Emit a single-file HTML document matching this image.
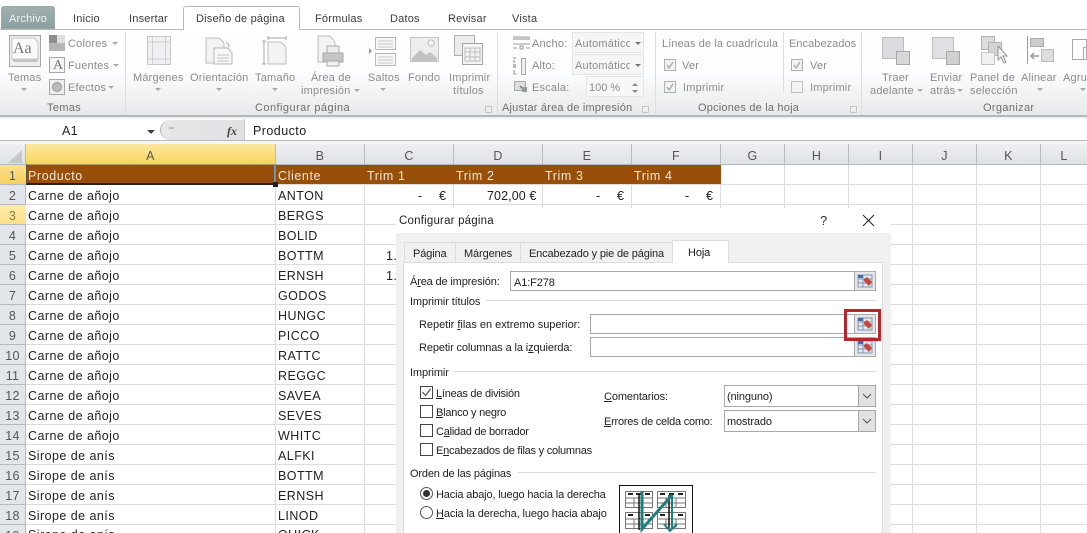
<!DOCTYPE html>
<html lang="es"><head><meta charset="utf-8"><title>Configurar página</title>
<style>
html,body{margin:0;padding:0;background:#fff}
#p{position:relative;width:1087px;height:533px;overflow:hidden;background:#fff;font-family:"Liberation Sans",sans-serif;font-size:12px;color:#222}
#p div,#p span.a,#p svg{position:absolute}
.t{position:absolute;white-space:nowrap;line-height:14px;height:14px;margin-top:1px}
.tab{color:#3c3c3c;font-size:11px;letter-spacing:.2px;top:11px}
.r{color:#8b8b8b;font-size:11px;letter-spacing:.2px;text-align:center}
.g{color:#6e6e6e;font-size:11px;letter-spacing:.35px;top:100px}
.c{font-size:12.5px;letter-spacing:.45px;color:#222}
.h{color:#555;font-size:12.5px;text-align:center;top:148px;letter-spacing:.3px}
.n{color:#555;font-size:12.5px;left:0;width:25px;text-align:center;letter-spacing:.3px}
.w{font-size:12.5px;letter-spacing:.6px;top:168px;color:#f3e6d6}
.d{font-size:11px;color:#222;letter-spacing:-.12px}
.k{letter-spacing:-.24px}
.tri{position:absolute;width:0;height:0;border-left:3px solid transparent;border-right:3px solid transparent;border-top:3px solid #aaa}
u{text-decoration:underline}
</style></head><body><div id="p">

<!-- tabs -->
<div style="left:1px;top:6px;width:54px;height:23px;background:linear-gradient(#9fb0b0,#8ba0a0);border-radius:3px 3px 0 0;border:1px solid #9aa8a8;box-sizing:border-box"></div>
<span class="t tab" style="left:9px;color:#eef2f2">Archivo</span>
<div style="left:0;top:29px;width:1087px;height:1px;background:#b9b9b9"></div>
<div style="left:183px;top:6px;width:117px;height:24px;background:#fff;border:1px solid #b9b9b9;border-bottom:0;border-radius:3px 3px 0 0;box-sizing:border-box"></div>
<span class="t tab" style="left:73px">Inicio</span>
<span class="t tab" style="left:129px">Insertar</span>
<span class="t tab" style="left:196px">Diseño de página</span>
<span class="t tab" style="left:315px">Fórmulas</span>
<span class="t tab" style="left:390px">Datos</span>
<span class="t tab" style="left:448px">Revisar</span>
<span class="t tab" style="left:512px">Vista</span>

<!-- ribbon -->
<div style="left:0;top:30px;width:1087px;height:85px;background:linear-gradient(#fff 0,#fdfdfe 50%,#e7e9ec 100%)"></div>
<div style="left:0;top:115px;width:1087px;height:2px;background:#b4b6b9"></div>
<div style="left:0;top:117px;width:1087px;height:2px;background:#f1f2f3"></div>
<div style="left:125px;top:32px;width:1px;height:83px;background:#dcdfe2"></div>
<div style="left:497px;top:32px;width:1px;height:83px;background:#dcdfe2"></div>
<div style="left:655px;top:32px;width:1px;height:83px;background:#dcdfe2"></div>
<div style="left:783px;top:32px;width:1px;height:60px;background:#dcdfe2"></div>
<div style="left:861px;top:32px;width:1px;height:83px;background:#dcdfe2"></div>

<!-- ribbon icons -->
<svg style="left:0;top:30px" width="1087" height="85" viewBox="0 30 1087 85" fill="none">
<rect x="9.5" y="35.5" width="31" height="31" fill="#eeeeee" stroke="#a8a8a8"/>
<path d="M12 38h22l4 4v17H12z" fill="#fafafa" stroke="#c4c4c4"/>
<rect x="13" y="59" width="25" height="3" fill="#c4c4c4"/>
<rect x="49" y="35" width="16" height="16" fill="#b5b5b5"/><rect x="49" y="35" width="8" height="8" fill="#8f8f8f"/><rect x="57" y="35" width="8" height="8" fill="#dedede"/>
<rect x="49.5" y="57.5" width="15" height="15" fill="#f4f4f4" stroke="#a8a8a8"/>
<rect x="49.5" y="79.5" width="15" height="15" fill="#eee" stroke="#a8a8a8"/><circle cx="57" cy="87" r="4.5" fill="#bbb" stroke="#999"/>
<rect x="147.5" y="36.5" width="23" height="28" fill="#f0f0f2" stroke="#c6c6c8"/><path d="M147 42h24M147 59h24M152.500 36v29M165.500 36v29" stroke="#d0d0d2"/>
<path d="M206 38h13l5 5v20h-18z" fill="#f3f3f3" stroke="#bdbdbd"/>
<path d="M214 48h14l4 5v11h-18z" fill="#f8f8f8" stroke="#b5b5b5" /><path d="M217 55h12M217 58h12M217 61h12" stroke="#c4c4c4"/>
<path d="M226 42l3 3-1 2" stroke="#aaa"/>
<path d="M268 38h18M268 36v4M286 36v4M264 41v23M262 41h4M262 64h4" stroke="#a6a6a6"/>
<path d="M268 42h13l5 5v17h-18z" fill="#f3f3f3" stroke="#bdbdbd"/>
<path d="M318 36h12l5 6v20h-17z" fill="#f3f3f3" stroke="#bdbdbd"/>
<rect x="323" y="53" width="20" height="9" fill="#c5c5c5" stroke="#a8a8a8"/><rect x="327" y="46" width="12" height="7" fill="#eee" stroke="#a8a8a8"/><rect x="327" y="61" width="12" height="5" fill="#f2f2f2" stroke="#a8a8a8"/>
<rect x="375.500" y="37.500" width="20" height="12" fill="#f6f6f6" stroke="#b8b8b8"/><rect x="375.500" y="53.500" width="20" height="12" fill="#f6f6f6" stroke="#b8b8b8"/>
<path d="M378 41h15M378 44h15M378 47h15M378 57h15M378 60h15M378 63h15" stroke="#c8c8c8"/><path d="M369 48l3 3-3 3z" fill="#9a9a9a"/>
<rect x="410.500" y="37.500" width="28" height="24" fill="#ededed" stroke="#c4c4c4"/><path d="M412 58l8-8 6 5 4-3 7 6v3h-25z" fill="#c2c2c2"/><circle cx="431" cy="43" r="3" fill="#f8f8f8" stroke="#bbb"/>
<rect x="454.500" y="35.500" width="20" height="20" fill="#ececec" stroke="#b0b0b0"/><rect x="462.500" y="43.500" width="20" height="21" fill="#f4f4f4" stroke="#a6a6a6"/><path d="M465 48h15v13h-15zM470 48v13M475 48v13M465 52h15M465 57h15" stroke="#bdbdbd"/>
<path d="M513 37h17M513 44h17" stroke="#9a9a9a"/><rect x="513" y="37" width="17" height="3" fill="#c4c4c4"/><path d="M513 48h4M526 48h4M520 46h3v3h-3z" stroke="#9a9a9a"/>
<path d="M513 58h3M513 74h3M514 60v3M514 70v3" stroke="#8f8f8f"/><rect x="513" y="64" width="3" height="4" fill="#bbb"/><rect x="521.500" y="58.500" width="4" height="16" fill="#eee" stroke="#aaa"/>
<rect x="514.500" y="81.500" width="11" height="9" fill="#ddd" stroke="#aaa"/><path d="M520 86l6 6" stroke="#777" stroke-width="1.500"/><rect x="522" y="87" width="5" height="5" fill="#9a9a9a"/>
<rect x="664.500" y="59.500" width="11" height="11" fill="#f2f2f2" stroke="#b0b0b0"/><path d="M667 65l2 3 4-6" stroke="#a4a4a4" stroke-width="1.300"/>
<rect x="664.500" y="81.500" width="11" height="11" fill="#f2f2f2" stroke="#b0b0b0"/><path d="M667 87l2 3 4-6" stroke="#a4a4a4" stroke-width="1.300"/>
<rect x="791.500" y="59.500" width="11" height="11" fill="#f2f2f2" stroke="#b0b0b0"/><path d="M794 65l2 3 4-6" stroke="#a4a4a4" stroke-width="1.300"/>
<rect x="791.500" y="81.500" width="11" height="11" fill="#f4f4f4" stroke="#c0c0c0"/>
<rect x="882.500" y="37.500" width="21" height="21" fill="#dcdce0" stroke="#bdbdbd"/><rect x="896.500" y="51.500" width="13" height="13" fill="#d8d8da" stroke="#a8a8a8"/>
<rect x="932.500" y="37.500" width="21" height="21" fill="#e0e0e4" stroke="#bdbdbd"/><rect x="946.500" y="51.500" width="13" height="13" fill="#d0d0d2" stroke="#a8a8a8"/>
<rect x="981.500" y="36.500" width="13" height="13" fill="#dcdcde" stroke="#b4b4b4"/><rect x="988.500" y="42.500" width="13" height="13" fill="#d4d4d6" stroke="#b4b4b4"/><rect x="981.500" y="52.500" width="13" height="12" fill="#f0f0f2" stroke="#c4c4c4"/><path d="M998 46v14l3-3 3 6 2-1-3-6h4z" fill="#f2f2f2" stroke="#999"/>
<path d="M1027.500 36v28" stroke="#999"/><rect x="1030.500" y="38.500" width="13" height="8" fill="#ccc" stroke="#aaa"/><rect x="1041.500" y="49.500" width="12" height="12" fill="#ddd" stroke="#bbb"/><path d="M1039 56h-8m3-3l-3 3 3 3" stroke="#999" stroke-width="1.500"/>
<rect x="1072.500" y="39.500" width="14" height="20" stroke="#aaa"/><rect x="1083.500" y="47.500" width="10" height="12" stroke="#aaa"/>
<path d="M485.500 106.500h6v6h-6z" fill="#eee" stroke="#c4c4c4"/><path d="M642.500 106.500h6v6h-6z" fill="#eee" stroke="#c4c4c4"/><path d="M850.500 106.500h6v6h-6z" fill="#eee" stroke="#c4c4c4"/>
</svg>
<span class="t" style="left:13px;top:38px;font:16px 'Liberation Serif',serif;color:#777;height:20px;line-height:20px">Aa</span>
<span class="t" style="left:53px;top:57px;font:14px 'Liberation Serif',serif;color:#777">A</span>

<span class="t r" style="left:68px;top:36px">Colores</span><i class="tri" style="left:112px;top:42px"></i>
<span class="t r" style="left:68px;top:58px">Fuentes</span><i class="tri" style="left:113px;top:64px"></i>
<span class="t r" style="left:68px;top:80px">Efectos</span><i class="tri" style="left:108px;top:86px"></i>
<span class="t r" style="left:8px;top:70px">Temas</span><i class="tri" style="left:21px;top:88px"></i>
<span class="t g" style="left:47px">Temas</span>
<span class="t r" style="left:133px;top:70px">Márgenes</span><i class="tri" style="left:155px;top:88px"></i>
<span class="t r" style="left:190px;top:70px">Orientación</span><i class="tri" style="left:216px;top:88px"></i>
<span class="t r" style="left:255px;top:70px">Tamaño</span><i class="tri" style="left:272px;top:88px"></i>
<span class="t r" style="left:311px;top:70px">Área de</span>
<span class="t r" style="left:301px;top:83px">impresión</span><i class="tri" style="left:354px;top:89px"></i>
<span class="t r" style="left:368px;top:70px">Saltos</span><i class="tri" style="left:380px;top:88px"></i>
<span class="t r" style="left:408px;top:70px">Fondo</span>
<span class="t r" style="left:449px;top:70px">Imprimir</span>
<span class="t r" style="left:453px;top:83px">títulos</span>
<span class="t g" style="left:255px;letter-spacing:.45px">Configurar página</span>
<span class="t r" style="left:532px;top:36px">Ancho:</span>
<span class="t r" style="left:532px;top:58px">Alto:</span>
<span class="t r" style="left:532px;top:80px">Escala:</span>
<div style="left:572px;top:32px;width:72px;height:21px;background:#f5f6f7;border:1px solid #e4e5e7;box-sizing:border-box"></div>
<div style="left:572px;top:54px;width:72px;height:21px;background:#f5f6f7;border:1px solid #e4e5e7;box-sizing:border-box"></div>
<div style="left:586px;top:76px;width:58px;height:21px;background:#f7f8f9;border:1px solid #e4e5e7;box-sizing:border-box"></div>
<span class="t r" style="left:575px;top:36px;width:55px;overflow:hidden;text-align:left">Automático</span><i class="tri" style="left:635px;top:42px;border-top-color:#777"></i>
<span class="t r" style="left:575px;top:58px;width:55px;overflow:hidden;text-align:left">Automático</span><i class="tri" style="left:635px;top:64px;border-top-color:#777"></i>
<span class="t r" style="left:589px;top:80px;letter-spacing:0">100 %</span>
<i class="tri" style="left:632px;top:83px;border-top:0;border-bottom:3px solid #888"></i><i class="tri" style="left:632px;top:90px;border-top-color:#888"></i>
<span class="t g" style="left:502px;letter-spacing:.2px">Ajustar área de impresión</span>
<span class="t r" style="left:662px;top:36px;letter-spacing:.1px">Líneas de la cuadrícula</span>
<span class="t r" style="left:682px;top:58px">Ver</span>
<span class="t r" style="left:683px;top:80px">Imprimir</span>
<span class="t r" style="left:789px;top:36px;letter-spacing:.05px">Encabezados</span>
<span class="t r" style="left:810px;top:58px">Ver</span>
<span class="t r" style="left:810px;top:80px">Imprimir</span>
<span class="t g" style="left:698px;letter-spacing:.2px">Opciones de la hoja</span>
<span class="t r" style="left:882px;top:70px">Traer</span>
<span class="t r" style="left:870px;top:83px">adelante</span><i class="tri" style="left:917px;top:89px"></i>
<span class="t r" style="left:930px;top:70px">Enviar</span>
<span class="t r" style="left:930px;top:83px">atrás</span><i class="tri" style="left:957px;top:89px"></i>
<span class="t r" style="left:970px;top:70px">Panel de</span>
<span class="t r" style="left:970px;top:83px">selección</span>
<span class="t r" style="left:1021px;top:70px">Alinear</span><i class="tri" style="left:1037px;top:88px"></i>
<span class="t r" style="left:1063px;top:70px">Agrupar</span><i class="tri" style="left:1080px;top:88px"></i>
<span class="t g" style="left:983px">Organizar</span>

<!-- formula bar -->
<div style="left:0;top:119px;width:1087px;height:21px;background:#fff;border-bottom:1px solid #b9bcbf;box-sizing:content-box"></div>
<span class="t" style="left:62px;top:123px;font-size:12.500px;letter-spacing:.3px">A1</span>
<div style="left:147px;top:130px;width:0;height:0;border-left:4px solid transparent;border-right:4px solid transparent;border-top:4px solid #444"></div>
<div style="left:160px;top:120px;width:84px;height:20px;background:linear-gradient(90deg,#e4e6e8,#dfe1e4);border-radius:10px 0 0 10px;border-left:1px solid #b4b6b8;box-sizing:border-box"></div>
<div style="left:169px;top:127px;width:5px;height:2px;background:#bbb"></div>
<span class="t" style="left:227px;top:123px;font:italic bold 12px 'Liberation Serif',serif;color:#444">fx</span>
<div style="left:244px;top:119px;width:1px;height:21px;background:#c8c8c8"></div>
<span class="t c" style="left:253px;top:123px">Producto</span>
<div style="left:0;top:141px;width:1087px;height:3px;background:#f4f5f6"></div>

<!-- grid -->
<div style="left:26px;top:164px;width:1061px;height:369px;background:repeating-linear-gradient(to bottom,#dadcdd 0,#dadcdd 1px,transparent 1px,transparent 20px)"></div>
<div style="left:275px;top:164px;width:1px;height:369px;background:#dadcdd"></div>
<div style="left:364px;top:164px;width:1px;height:369px;background:#dadcdd"></div>
<div style="left:453px;top:164px;width:1px;height:369px;background:#dadcdd"></div>
<div style="left:542px;top:164px;width:1px;height:369px;background:#dadcdd"></div>
<div style="left:631px;top:164px;width:1px;height:369px;background:#dadcdd"></div>
<div style="left:720px;top:164px;width:1px;height:369px;background:#dadcdd"></div>
<div style="left:784px;top:164px;width:1px;height:369px;background:#dadcdd"></div>
<div style="left:848px;top:164px;width:1px;height:369px;background:#dadcdd"></div>
<div style="left:912px;top:164px;width:1px;height:369px;background:#dadcdd"></div>
<div style="left:976px;top:164px;width:1px;height:369px;background:#dadcdd"></div>
<div style="left:1040px;top:164px;width:1px;height:369px;background:#dadcdd"></div>

<!-- column headers -->
<div style="left:0;top:144px;width:1087px;height:20px;background:linear-gradient(#edeff2,#dfe2e6);border-bottom:1px solid #b4b8bc;box-sizing:content-box"></div>
<div style="left:26px;top:144px;width:249px;height:20px;background:linear-gradient(#fbe9a0,#f9d45e);border-bottom:1px solid #c8a94c"></div>
<svg style="left:0;top:144px" width="1087" height="20" fill="none"><path d="M8 19L22 19 22 6z" fill="#c6c9cc"/><path d="M25.500 0v20M275.500 0v20M364.500 0v20M453.500 0v20M542.500 0v20M631.500 0v20M720.500 0v20M784.500 0v20M848.500 0v20M912.500 0v20M976.500 0v20M1040.500 0v20" stroke="#b8bbbe"/></svg>
<span class="t h" style="left:26px;width:249px">A</span>
<span class="t h" style="left:276px;width:88px">B</span>
<span class="t h" style="left:365px;width:88px">C</span>
<span class="t h" style="left:454px;width:88px">D</span>
<span class="t h" style="left:543px;width:88px">E</span>
<span class="t h" style="left:632px;width:88px">F</span>
<span class="t h" style="left:721px;width:63px">G</span>
<span class="t h" style="left:785px;width:63px">H</span>
<span class="t h" style="left:849px;width:63px">I</span>
<span class="t h" style="left:913px;width:63px">J</span>
<span class="t h" style="left:977px;width:63px">K</span>
<span class="t h" style="left:1041px;width:46px">L</span>

<!-- row headers -->
<div style="left:0;top:165px;width:25px;height:368px;background:repeating-linear-gradient(to bottom,#e2e5e9 0,#e2e5e9 19px,#b6b9bd 19px,#b6b9bd 20px)"></div>
<div style="left:25px;top:165px;width:1px;height:368px;background:#b4b8bc"></div>
<div style="left:0;top:165px;width:26px;height:19px;background:linear-gradient(#fbe08a,#f8cf62)"></div>
<div style="left:0;top:205px;width:26px;height:19px;background:linear-gradient(#fdeea8,#fbe08a)"></div>
<span class="t n" style="top:168px">1</span><span class="t n" style="top:188px">2</span><span class="t n" style="top:208px;color:#8a7a4a">3</span><span class="t n" style="top:228px">4</span><span class="t n" style="top:248px">5</span><span class="t n" style="top:268px">6</span><span class="t n" style="top:288px">7</span><span class="t n" style="top:308px">8</span><span class="t n" style="top:328px">9</span><span class="t n" style="top:348px">10</span><span class="t n" style="top:368px">11</span><span class="t n" style="top:388px">12</span><span class="t n" style="top:408px">13</span><span class="t n" style="top:428px">14</span><span class="t n" style="top:448px">15</span><span class="t n" style="top:468px">16</span><span class="t n" style="top:488px">17</span><span class="t n" style="top:508px">18</span><span class="t n" style="top:528px">19</span>

<!-- header row -->
<div style="left:26px;top:165px;width:695px;height:19px;background:#974f0a"></div>
<div style="left:26px;top:164px;width:250px;height:21px;border:1px solid #5f5a50;border-top-color:#b79a5c;border-right:2px solid #6f90b4;border-bottom:2px solid #222;box-sizing:border-box"></div>
<div style="left:273px;top:182px;width:5px;height:5px;background:#222"></div>
<span class="t w" style="left:28px">Producto</span>
<span class="t w" style="left:278px">Cliente</span>
<span class="t w" style="left:367px">Trim 1</span>
<span class="t w" style="left:456px">Trim 2</span>
<span class="t w" style="left:545px">Trim 3</span>
<span class="t w" style="left:634px">Trim 4</span>

<!-- data -->
<span class="t c" style="left:28px;top:188px">Carne de añojo</span><span class="t c" style="left:278px;top:188px">ANTON</span>
<span class="t c" style="left:28px;top:208px">Carne de añojo</span><span class="t c" style="left:278px;top:208px">BERGS</span>
<span class="t c" style="left:28px;top:228px">Carne de añojo</span><span class="t c" style="left:278px;top:228px">BOLID</span>
<span class="t c" style="left:28px;top:248px">Carne de añojo</span><span class="t c" style="left:278px;top:248px">BOTTM</span>
<span class="t c" style="left:28px;top:268px">Carne de añojo</span><span class="t c" style="left:278px;top:268px">ERNSH</span>
<span class="t c" style="left:28px;top:288px">Carne de añojo</span><span class="t c" style="left:278px;top:288px">GODOS</span>
<span class="t c" style="left:28px;top:308px">Carne de añojo</span><span class="t c" style="left:278px;top:308px">HUNGC</span>
<span class="t c" style="left:28px;top:328px">Carne de añojo</span><span class="t c" style="left:278px;top:328px">PICCO</span>
<span class="t c" style="left:28px;top:348px">Carne de añojo</span><span class="t c" style="left:278px;top:348px">RATTC</span>
<span class="t c" style="left:28px;top:368px">Carne de añojo</span><span class="t c" style="left:278px;top:368px">REGGC</span>
<span class="t c" style="left:28px;top:388px">Carne de añojo</span><span class="t c" style="left:278px;top:388px">SAVEA</span>
<span class="t c" style="left:28px;top:408px">Carne de añojo</span><span class="t c" style="left:278px;top:408px">SEVES</span>
<span class="t c" style="left:28px;top:428px">Carne de añojo</span><span class="t c" style="left:278px;top:428px">WHITC</span>
<span class="t c" style="left:28px;top:448px">Sirope de anís</span><span class="t c" style="left:278px;top:448px">ALFKI</span>
<span class="t c" style="left:28px;top:468px">Sirope de anís</span><span class="t c" style="left:278px;top:468px">BOTTM</span>
<span class="t c" style="left:28px;top:488px">Sirope de anís</span><span class="t c" style="left:278px;top:488px">ERNSH</span>
<span class="t c" style="left:28px;top:508px">Sirope de anís</span><span class="t c" style="left:278px;top:508px">LINOD</span>
<span class="t c" style="left:28px;top:527px">Sirope de anís</span><span class="t c" style="left:278px;top:527px">QUICK</span>
<span class="t c" style="left:418px;top:188px">-</span><span class="t c" style="left:439px;top:188px">€</span>
<span class="t c" style="left:487px;top:188px;letter-spacing:.1px">702,00 €</span>
<span class="t c" style="left:596px;top:188px">-</span><span class="t c" style="left:617px;top:188px">€</span>
<span class="t c" style="left:685px;top:188px">-</span><span class="t c" style="left:706px;top:188px">€</span>
<span class="t c" style="left:386px;top:248px">1.</span>
<span class="t c" style="left:386px;top:268px">1.</span>

<!-- dialog -->
<div style="left:396px;top:208px;width:495px;height:325px;background:#f0f0f0"></div>
<div style="left:396px;top:208px;width:495px;height:25px;background:#fff"></div>
<span class="t" style="left:399px;top:213px;font-size:11.500px;letter-spacing:.2px">Configurar página</span>
<span class="t" style="left:820px;top:213px;font-size:13px;color:#333">?</span>
<svg style="left:862px;top:214px" width="13" height="13" fill="none"><path d="M1 1l11 11M12 1L1 12" stroke="#222"/></svg>

<div style="left:403px;top:262px;width:480px;height:285px;background:#fff;border:1px solid #dcdcdc;box-sizing:border-box"></div>
<div style="left:404px;top:242px;width:269px;height:20px;border:1px solid #dcdcdc;border-bottom:0;background:#f0f0f0;box-sizing:border-box"></div>
<div style="left:455px;top:242px;width:1px;height:20px;background:#dcdcdc"></div>
<div style="left:520px;top:242px;width:1px;height:20px;background:#dcdcdc"></div>
<div style="left:672px;top:240px;width:57px;height:23px;background:#fff;border:1px solid #dcdcdc;border-bottom:0;box-sizing:border-box"></div>
<span class="t d" style="left:413px;top:246px">Página</span>
<span class="t d" style="left:464px;top:246px">Márgenes</span>
<span class="t d" style="left:529px;top:246px;letter-spacing:-.15px">Encabezado y pie de página</span>
<span class="t d" style="left:688px;top:245px">Hoja</span>

<span class="t d" style="left:410px;top:274px;letter-spacing:-.15px">Á<u>r</u>ea de impresión:</span>
<div style="left:510px;top:271px;width:345px;height:20px;background:#fff;border:1px solid #a8a8a8;border-right:0;box-sizing:border-box"></div>
<span class="t d" style="left:514px;top:275px">A1:F278</span>

<span class="t d" style="left:410px;top:294px">Imprimir títulos</span>
<div style="left:486px;top:300px;width:390px;height:1px;background:#dcdcdc"></div>
<span class="t d" style="left:419px;top:317px;letter-spacing:-.02px">Repetir <u>f</u>ilas en extremo superior:</span>
<div style="left:590px;top:314px;width:265px;height:20px;background:#fff;border:1px solid #a8a8a8;border-right:0;box-sizing:border-box"></div>
<span class="t d" style="left:419px;top:340px">Repetir columnas a la i<u>z</u>quierda:</span>
<div style="left:590px;top:337px;width:265px;height:20px;background:#fff;border:1px solid #a8a8a8;border-right:0;box-sizing:border-box"></div>

<svg style="left:854px;top:271px" width="22" height="86" fill="none">
<g><rect x=".5" y=".5" width="21" height="19" fill="#e6e6e6" stroke="#ababab"/><path d="M4 4h14v12H4zM4 8h14M4 12h14M9 4v12" stroke="#7f95bd"/><rect x="4" y="4" width="5" height="3" fill="#3f6fa8"/><path d="M10 8l3-2 5 5-3 4-5-5z" fill="#c4463c"/></g>
<g transform="translate(0,43)"><rect x=".5" y=".5" width="21" height="19" fill="#e6e6e6" stroke="#ababab"/><path d="M4 4h14v12H4zM4 8h14M4 12h14M9 4v12" stroke="#7f95bd"/><rect x="4" y="4" width="5" height="3" fill="#3f6fa8"/><path d="M10 8l3-2 5 5-3 4-5-5z" fill="#c4463c"/></g>
<g transform="translate(0,66)"><rect x=".5" y=".5" width="21" height="19" fill="#e6e6e6" stroke="#ababab"/><path d="M4 4h14v12H4zM4 8h14M4 12h14M9 4v12" stroke="#7f95bd"/><rect x="4" y="4" width="5" height="3" fill="#3f6fa8"/><path d="M10 8l3-2 5 5-3 4-5-5z" fill="#c4463c"/></g>
</svg>
<div style="left:844px;top:309px;width:37px;height:32px;border:3px solid #b5262e;box-sizing:border-box"></div>

<span class="t d" style="left:410px;top:365px">Imprimir</span>
<div style="left:454px;top:371px;width:422px;height:1px;background:#dcdcdc"></div>

<svg style="left:420px;top:386px" width="14" height="70" fill="none">
<rect x=".5" y=".5" width="12" height="12" fill="#fff" stroke="#444"/><path d="M2.500 6l3 3.500L10.500 3" stroke="#555" stroke-width="1.200"/>
<rect x=".5" y="19.500" width="12" height="12" fill="#fff" stroke="#444"/>
<rect x=".5" y="38.500" width="12" height="12" fill="#fff" stroke="#444"/>
<rect x=".5" y="57.500" width="12" height="12" fill="#fff" stroke="#444"/>
</svg>
<span class="t d k" style="left:436px;top:386px"><u>L</u>íneas de división</span>
<span class="t d k" style="left:436px;top:405px"><u>B</u>lanco y negro</span>
<span class="t d k" style="left:436px;top:424px">C<u>a</u>lidad de borrador</span>
<span class="t d k" style="left:436px;top:443px">E<u>n</u>cabezados de filas y columnas</span>

<span class="t d" style="left:604px;top:389px"><u>C</u>omentarios:</span>
<span class="t d k" style="left:604px;top:414px"><u>E</u>rrores de celda como:</span>
<div style="left:724px;top:385px;width:152px;height:22px;background:#fff;border:1px solid #a8a8a8;box-sizing:border-box"></div>
<div style="left:724px;top:410px;width:152px;height:22px;background:#fff;border:1px solid #a8a8a8;box-sizing:border-box"></div>
<div style="left:858px;top:385px;width:18px;height:22px;background:#e1e1e1;border:1px solid #a8a8a8;box-sizing:border-box"></div>
<div style="left:858px;top:410px;width:18px;height:22px;background:#e1e1e1;border:1px solid #a8a8a8;box-sizing:border-box"></div>
<svg style="left:858px;top:385px" width="18" height="47" fill="none"><path d="M5 9l4 4 4-4M5 34l4 4 4-4" stroke="#555"/></svg>
<span class="t d" style="left:727px;top:389px">(ninguno)</span>
<span class="t d" style="left:727px;top:414px">mostrado</span>

<span class="t d" style="left:410px;top:466px;letter-spacing:-.17px">Orden de las páginas</span>
<div style="left:518px;top:472px;width:358px;height:1px;background:#dcdcdc"></div>

<svg style="left:420px;top:487px" width="14" height="34" fill="none">
<circle cx="6.500" cy="6.500" r="6" fill="#fff" stroke="#555"/><circle cx="6.500" cy="6.500" r="3.500" fill="#333"/>
<circle cx="6.500" cy="25.500" r="6" fill="#fff" stroke="#555"/>
</svg>
<span class="t d" style="left:436px;top:487px;letter-spacing:-.15px">Hacia abajo, luego hacia la derecha</span>
<span class="t d" style="left:436px;top:506px;letter-spacing:-.12px"><u>H</u>acia la derecha, luego hacia abajo</span>

<svg style="left:619px;top:485px" width="75" height="48" fill="none">
<rect x=".5" y=".5" width="73" height="60" fill="#fff" stroke="#111"/>
<g stroke="#777"><rect x="6.500" y="6.500" width="27" height="16"/><rect x="38.500" y="6.500" width="28" height="16"/><rect x="6.500" y="27.500" width="27" height="16"/><rect x="38.500" y="27.500" width="28" height="16"/>
<path d="M7 13h26M7 18h26M39 13h27M39 18h27M7 34h26M7 39h26M39 34h27M39 39h27M15 13v9M24 13v9M47 13v9M57 13v9M15 34v9M24 34v9M47 34v9M57 34v9"/></g>
<g fill="#222"><rect x="9" y="8" width="5" height="2"/><rect x="17" y="8" width="5" height="2"/><rect x="26" y="8" width="5" height="2"/><rect x="41" y="8" width="5" height="2"/><rect x="50" y="8" width="5" height="2"/><rect x="59" y="8" width="5" height="2"/><rect x="9" y="29" width="5" height="2"/><rect x="26" y="29" width="5" height="2"/><rect x="41" y="29" width="5" height="2"/><rect x="59" y="29" width="5" height="2"/></g>
<path d="M20 9v36M50 10v33" stroke="#111" stroke-width="1.500"/>
<path d="M23 6v38L53 10" stroke="#1f7f7f" stroke-width="3"/>
<path d="M53 10v33" stroke="#1f7f7f" stroke-width="2"/>
<path d="M45 39l6 7 7-7" stroke="#1f7f7f" stroke-width="2"/>
</svg>
</div></body></html>
